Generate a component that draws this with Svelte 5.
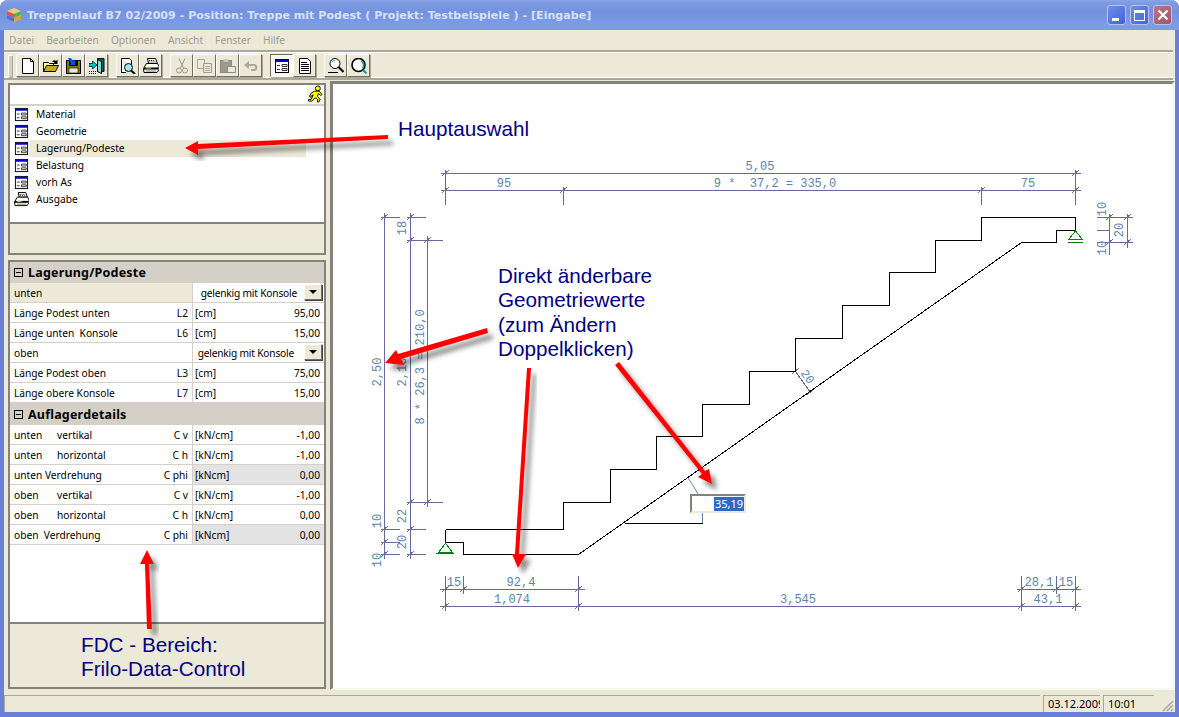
<script>
  const menus = ["Datei", "Bearbeiten", "Optionen", "Ansicht", "Fenster", "Hilfe"];

  const toolGroups = [
    ["new", "open", "save", "exit"],
    ["preview", "print"],
    ["cut", "copy", "paste", "undo"],
    ["form", "doc"],
    ["zoom", "zoomall"],
  ];

  const navItems = [
    { name: "Material", icon: "form" },
    { name: "Geometrie", icon: "form" },
    { name: "Lagerung/Podeste", icon: "form", active: true },
    { name: "Belastung", icon: "form" },
    { name: "vorh As", icon: "form" },
    { name: "Ausgabe", icon: "print" },
  ];

  const lagerRows = [
    { label: "unten", select: "gelenkig mit Konsole", tint: true, pad: 23 },
    { label: "Länge Podest unten", sym: "L2", unit: "[cm]", val: "95,00" },
    { label: "Länge unten  Konsole", sym: "L6", unit: "[cm]", val: "15,00" },
    { label: "oben", select: "gelenkig mit Konsole", pad: 26 },
    { label: "Länge Podest oben", sym: "L3", unit: "[cm]", val: "75,00" },
    { label: "Länge obere Konsole", sym: "L7", unit: "[cm]", val: "15,00" },
  ];

  const detailRows = [
    { label: "unten", tab: "vertikal", sym: "C v", unit: "[kN/cm]", val: "-1,00" },
    { label: "unten", tab: "horizontal", sym: "C h", unit: "[kN/cm]", val: "-1,00" },
    { label: "unten Verdrehung", sym: "C phi", unit: "[kNcm]", val: "0,00", grey: true },
    { label: "oben", tab: "vertikal", sym: "C v", unit: "[kN/cm]", val: "-1,00" },
    { label: "oben", tab: "horizontal", sym: "C h", unit: "[kN/cm]", val: "0,00" },
    { label: "oben  Verdrehung", sym: "C phi", unit: "[kNcm]", val: "0,00", grey: true },
  ];

  // drawing, in page coordinates
  const stairs =
    "445.5,529.5 563.5,529.5 563.5,502.5 610.5,502.5 610.5,469.5 656.5,469.5 656.5,436.5 702.5,436.5 702.5,404.5 749.5,404.5 749.5,371.5 795.5,371.5 795.5,338.5 842.5,338.5 842.5,305.5 889.5,305.5 889.5,272.5 935.5,272.5 935.5,240.5 981.5,240.5 981.5,217.5 1075.5,217.5 1075.5,230.5 1056.5,230.5 1056.5,242.5 1021.5,242.5 578.5,554.5 463.5,554.5 463.5,542.5 445.5,542.5 445.5,529.5";

  const dimLines = [
    [440, 173, 1080, 173], [440, 190, 1080, 190],
    [445, 169, 445, 204], [563, 186, 563, 204], [981, 186, 981, 204], [1075, 169, 1075, 204],
    [384, 212, 384, 558], [410, 212, 410, 558], [427, 235, 427, 506],
    [380, 217, 399, 217], [406, 217, 425, 217], [406, 240, 442, 240], [406, 502, 442, 502],
    [380, 529, 399, 529], [406, 529, 425, 529], [380, 542, 399, 542], [380, 554, 399, 554], [406, 554, 425, 554],
    [1096, 217, 1132, 217], [1096, 230, 1109, 230], [1096, 242, 1132, 242],
    [1109, 213, 1109, 254], [1127, 213, 1127, 247],
    [439, 589, 584, 589], [439, 606, 1080, 606], [1016, 589, 1080, 589],
    [445, 575, 445, 610], [463, 575, 463, 593], [578, 575, 578, 610],
    [1021, 575, 1021, 610], [1056, 575, 1056, 593], [1075, 575, 1075, 610],
    [795, 371, 810, 392],
  ];

  const ticks = [
    [445, 173], [1075, 173], [445, 190], [563, 190], [981, 190], [1075, 190],
    [384, 217], [410, 217], [410, 240], [427, 240], [410, 502], [427, 502],
    [384, 529], [410, 529], [384, 542], [384, 554], [410, 554],
    [1109, 217], [1127, 217], [1109, 242], [1127, 242],
    [445, 589], [463, 589], [578, 589], [445, 606], [578, 606],
    [1021, 589], [1056, 589], [1075, 589], [1021, 606], [1075, 606],
    [795, 371], [810, 392],
  ];

  const dimTexts = [
    { x: 760, y: 170, t: "5,05" },
    { x: 504, y: 187, t: "95" },
    { x: 775, y: 187, t: "9 *\u00a0 37,2 = 335,0" },
    { x: 1028, y: 187, t: "75" },
    { x: 454, y: 586, t: "15" },
    { x: 521, y: 586, t: "92,4" },
    { x: 512, y: 603, t: "1,074" },
    { x: 798, y: 603, t: "3,545" },
    { x: 1039, y: 586, t: "28,1" },
    { x: 1066, y: 586, t: "15" },
    { x: 1048, y: 603, t: "43,1" },
    { x: 378, y: 372, t: "2,50", rot: -90 },
    { x: 403, y: 372, t: "2,10", rot: -90 },
    { x: 421, y: 367, t: "8 * 26,3 = 210,0", rot: -90 },
    { x: 403, y: 228, t: "18", rot: -90 },
    { x: 403, y: 516, t: "22", rot: -90 },
    { x: 403, y: 542, t: "20", rot: -90 },
    { x: 378, y: 521, t: "10", rot: -90 },
    { x: 378, y: 560, t: "10", rot: -90 },
    { x: 1103, y: 209, t: "10", rot: -90 },
    { x: 1120, y: 230, t: "20", rot: -90 },
    { x: 1103, y: 248, t: "10", rot: -90 },
    { x: 807, y: 377, t: "20", rot: 55 },
  ];

  const arrows = [
    "388,135 198,144 198,141 185,148 198,155 198,149 388,139",
    "487,328 398,354 396,350 385,363 404,365 401,359 488,333",
    "527,368 515,554 512,554 518,568 526,554 519,554 531,368",
    "615,365 702,474 698,477 712,484 709,469 705,471 619,362",
    "147,629 145,564 140,564 147,550 154,564 149,564 152,629",
  ];
</script>

{#snippet formIcon()}
  <rect x="1.5" y="1.5" width="13" height="13" fill="#fff" stroke="#000" />
  <rect x="2" y="2" width="12" height="2" fill="#0000e0" />
  <path d="M3 7.5h3M8 6.5h5v2H8zM3 11.5h3M8 10.5h5v2H8z" fill="none" stroke="#333" />
{/snippet}

{#snippet printIcon()}
  <path d="M4.5 .5h8l2 5h-9z" fill="#fff" stroke="#000" />
  <path d="M6 2.500h6M6.500 4h6.500" stroke="#000" stroke-dasharray="1 1" />
  <path d="M.5 10.500l3-5h11l1.500 3v3l-2 3H1z" fill="#fff" stroke="#000" />
  <path d="M1 9.500h14.500v2H1z" fill="#000" />
  <path d="M3 9.500h5v1H3z" fill="#e8e800" />
  <path d="M3 13h10" stroke="#777" />
{/snippet}

{#snippet toolIcon(name)}
  <svg class="ico" viewBox="0 0 16 16" width="16" height="16">
    {#if name === "new"}
      <path d="M2.500 .5h8l3 3v12h-11z" fill="#fff" stroke="#000" />
      <path d="M10.500 .5v3h3" fill="none" stroke="#000" />
    {:else if name === "open"}
      <path d="M.5 13.500v-9h5l1 1h4v2" fill="#ffff99" stroke="#000" />
      <path d="M.5 13.500l3-6h12l-3 6z" fill="#c8a820" stroke="#000" />
      <path d="M9 4c1-2 3-2 4-1l1.500-1.500v4.500h-4.500l1.500-1.500c-1-1-1-1-2.500-.5z" fill="#000" />
    {:else if name === "save"}
      <rect x=".5" y="2.500" width="14" height="13" fill="#808000" stroke="#000" />
      <rect x="3" y="10" width="9" height="5" fill="#e8e8d0" stroke="#000" stroke-width="0.600" />
      <rect x="3" y="3" width="9" height="5" fill="#000" />
      <path d="M2 0h2.500l3 3 1.500-1.500v5.500h-5.500l1.500-1.500z" fill="#0050e0" />
    {:else if name === "exit"}
      <path d="M8.500 .5h6.500v13h-6.500z" fill="#006868" stroke="#000" />
      <path d="M8.500 1.500l4 2v12l-4-2z" fill="#90d8d8" stroke="#000" />
      <path d="M0 5.500h3.500V3l4.500 4-4.500 4V8.500H0z" fill="#00c8c8" stroke="#000" stroke-width="0.700" />
      <path d="M0 13.500h8M0 15.500h8" stroke="#000" stroke-dasharray="1 1" />
    {:else if name === "preview"}
      <path d="M1.500 .5h8l2 2v5M6 14.500H1.500V.5" fill="#fff" stroke="#000" />
      <circle cx="8.500" cy="9.500" r="4" fill="#a0e8f0" stroke="#000" />
      <path d="M11 12.500l4 3.500" stroke="#000" stroke-width="2" />
    {:else if name === "print"}
      {@render printIcon()}
    {:else if name === "cut"}
      <path d="M5 .5l4.500 9.500M11 .5l-4.500 9.500" stroke="#9c9a8e" fill="none" />
      <circle cx="5" cy="12.500" r="2.500" fill="none" stroke="#9c9a8e" />
      <circle cx="11" cy="12.500" r="2.500" fill="none" stroke="#9c9a8e" />
    {:else if name === "copy"}
      <path d="M.5 1.500h7v9h-7z" fill="#ece9d8" stroke="#aca899" />
      <path d="M6.500 5.500h8v9h-8z" fill="#ece9d8" stroke="#9c9a8e" />
      <path d="M8 8.500h5M8 10.500h5M8 12.500h5" stroke="#aca899" />
    {:else if name === "paste"}
      <rect x=".5" y="2.500" width="11" height="12" fill="#9c9a8e" stroke="#8c8a7e" />
      <rect x="3.500" y="1" width="5" height="3" fill="#c8c6ba" />
      <path d="M7.500 8.500h8v6h-8z" fill="#ece9d8" stroke="#8c8a7e" />
    {:else if name === "undo"}
      <path d="M4 7h7c3 0 3 5 0 5H8" fill="none" stroke="#aca899" stroke-width="2" />
      <path d="M1 7l5-4v8z" fill="#aca899" />
    {:else if name === "form"}
      {@render formIcon()}
    {:else if name === "doc"}
      <path d="M2.500 .5h8l3 3v12h-11z" fill="#fff" stroke="#000" />
      <path d="M4 4.500h6M4 6.500h8M4 8.500h8M4 10.500h8M4 12.500h8" stroke="#000" />
    {:else if name === "zoom"}
      <circle cx="7" cy="5.500" r="5" fill="#fff" stroke="#000" />
      <path d="M10.500 9l5 5" stroke="#000" stroke-width="2" />
      <path d="M0 14.500h10" stroke="#000" />
      <path d="M4 4a3.500 3.500 0 0 1 2.500-1.500" stroke="#00a0a0" fill="none" />
    {:else}
      <circle cx="7.500" cy="7" r="6.500" fill="#fff" stroke="#000" stroke-width="1.600" />
      <path d="M10 3a5 5 0 0 1 1.500 7.500" stroke="#00b0b0" fill="none" stroke-width="1.500" />
      <path d="M12 12l3.500 3.500" stroke="#00a0a0" stroke-width="2" />
    {/if}
  </svg>
{/snippet}

{#snippet row(r)}
  <div class="row">
    <div class="label" class:tint={r.tint}>
      <span class="name">{#if r.tab}<span class="tab">{r.label}</span>{r.tab}{:else}{r.label}{/if}</span>
      {#if r.sym}<span class="sym">{r.sym}</span>{/if}
    </div>
    {#if r.select}
      <div class="value">
        <span class="choice" style="padding-right: {r.pad}px">{r.select}</span>
        <span class="drop"></span>
      </div>
    {:else}
      <div class="value" class:grey={r.grey}>
        <span>{r.unit}</span><span>{r.val}</span>
      </div>
    {/if}
  </div>
{/snippet}

<div class="window">
  <header class="titlebar">
    <svg class="appicon" viewBox="0 0 16 16" width="16" height="16">
      <path d="M8 1l7 3v8l-7 3-7-3V4z" fill="#e8d070" />
      <path d="M1 4l7 3v4L1 8z" fill="#e85050" />
      <path d="M8 7l7-3v4l-7 3z" fill="#50b060" />
      <path d="M1 8l7 3v4l-7-3z" fill="#5070e0" />
      <path d="M8 11l7-3v4l-7 3z" fill="#e0a040" />
    </svg>
    <span class="title">Treppenlauf B7 02/2009 - Position: Treppe mit Podest ( Projekt: Testbeispiele ) - [Eingabe]</span>
    <div class="caption">
      <span class="capbtn"><i class="min"></i></span>
      <span class="capbtn"><i class="max"></i></span>
      <span class="capbtn close">
        <svg viewBox="0 0 12 12" width="12" height="12"><path d="M1.500 1.500l9 9M10.500 1.500l-9 9" stroke="#fff" stroke-width="2.200" /></svg>
      </span>
    </div>
  </header>

  <nav class="menu">
    {#each menus as m}<span>{m}</span>{/each}
  </nav>

  <div class="toolbar">
    <span class="grip"></span>
    {#each toolGroups as group}
      <div class="group">
        {#each group as t}
          <span class="tool" class:on={t === "form"}>{@render toolIcon(t)}</span>
        {/each}
      </div>
    {/each}
  </div>

  <div class="workspace">
    <aside class="side">
      <section class="panel nav">
        <div class="search">
          <span class="runner">
            <svg viewBox="0 0 16 18" width="15" height="18">
              <circle cx="10.500" cy="3" r="2.600" fill="#ffff00" stroke="#000" />
              <path d="M7 6h5l3 3.500-1.500 1-2.500-2-1 3 3 3-1.500 3h-1.500l.5-2.500-3-2-3 3.500H.5v-1.500l3-.5 2-4.500-1.500.5-1 2-1.500-1 2-3.500z" fill="#ffff00" stroke="#000" />
            </svg>
          </span>
        </div>
        <ul class="list">
          {#each navItems as item}
            <li>
              <svg class="ico" viewBox="0 0 16 16" width="15" height="15">
                {#if item.icon === "form"}{@render formIcon()}{:else}{@render printIcon()}{/if}
              </svg>
              <span class="item" class:active={item.active}>{item.name}</span>
            </li>
          {/each}
        </ul>
        <div class="foot"></div>
      </section>

      <section class="panel fdc">
        <h3 class="head first"><span class="box"></span>Lagerung/Podeste</h3>
        {#each lagerRows as r}{@render row(r)}{/each}
        <h3 class="head"><span class="box"></span>Auflagerdetails</h3>
        {#each detailRows as r}{@render row(r)}{/each}
        <div class="blank"></div>
        <div class="note">FDC - Bereich:<br />Frilo-Data-Control</div>
      </section>
    </aside>

    <main class="canvas">
      <svg class="drawing" viewBox="333 84 839 604" width="839" height="604">
        <g class="dims">
          {#each dimLines as [x1, y1, x2, y2]}
            <line x1={x1 + 0.5} y1={y1 + 0.5} x2={x2 + 0.5} y2={y2 + 0.5} />
          {/each}
          {#each ticks as [x, y]}
            <line x1={x - 3} y1={y + 3} x2={x + 4} y2={y - 3} />
          {/each}
        </g>

        <polyline class="stair" points={stairs} />
        <path class="stair" d="M624.500 523.500H702.500" />
        <path class="arc" d="M688 478Q693 485 698 494M702.500 513V523" />

        <g class="support">
          <path d="M445.500 543L439 552H452ZM436 553.500H454" />
          <path d="M1075.500 231L1069 239H1082ZM1068 242.500H1083" />
        </g>

        {#each dimTexts as d}
          {#if d.rot}
            <text class="dimtext mid" transform="translate({d.x} {d.y}) rotate({d.rot})">{d.t}</text>
          {:else}
            <text class="dimtext" x={d.x} y={d.y}>{d.t}</text>
          {/if}
        {/each}
      </svg>

      <div class="edit"><span>35,19</span></div>
    </main>
  </div>

  <footer class="status">
    <span class="cell grow"></span>
    <span class="cell date">03.12.2009</span>
    <span class="cell time">10:01</span>
    <svg class="sizer" viewBox="0 0 12 12" width="12" height="12">
      <path d="M11 1L1 11M11 5L5 11M11 9L9 11" stroke="#aca899" stroke-width="1.500" />
    </svg>
  </footer>

  <svg class="overlay" viewBox="0 0 1179 717" width="1179" height="717">
    <defs>
      <filter id="shade" x="-30%" y="-30%" width="160%" height="160%">
        <feDropShadow dx="5" dy="6" stdDeviation="2.500" flood-color="#000" flood-opacity="0.450" />
      </filter>
    </defs>
    {#each arrows as pts}
      <polygon points={pts} fill="#ff0000" filter="url(#shade)" />
    {/each}
    <text class="callout" x="398" y="136">Hauptauswahl</text>
    <text class="callout" x="498" y="283">Direkt änderbare</text>
    <text class="callout" x="498" y="307">Geometriewerte</text>
    <text class="callout" x="498" y="332">(zum Ändern</text>
    <text class="callout" x="498" y="356">Doppelklicken)</text>
  </svg>
</div>

<style>
  :global(body) {
    margin: 0;
    background: #fff;
  }

  .window {
    position: relative;
    box-sizing: border-box;
    width: 1179px;
    height: 717px;
    display: flex;
    flex-direction: column;
    background: #ece9d8;
    border-left: 4px solid #6b80d9;
    border-right: 4px solid #6b80d9;
    border-bottom: 5px solid #6b80d9;
    border-radius: 8px 8px 0 0;
    font-family: "Noto Sans", sans-serif;
    font-size: 10.200px;
    color: #000;
  }

  .titlebar {
    height: 30px;
    margin: 0 -4px;
    padding: 0 7px 0 6px;
    flex: none;
    display: flex;
    align-items: center;
    border-radius: 8px 8px 0 0;
    background: linear-gradient(#8aa6ea 0, #7d9ae2 3px, #7491de 12px, #7c9ce6 24px, #7d9be0 30px);
  }
  .appicon { margin-right: 5px; }
  .title {
    flex: 1;
    font-family: "DejaVu Sans", sans-serif;
    font-weight: 700;
    font-size: 11px;
    letter-spacing: 0.050px;
    color: #d7e2f8;
    white-space: pre;
  }
  .caption { display: flex; gap: 4px; }
  .capbtn {
    box-sizing: border-box;
    width: 19px;
    height: 20px;
    display: flex;
    align-items: center;
    justify-content: center;
    position: relative;
    border: 1px solid #b4c6f0;
    border-radius: 3px;
    background: linear-gradient(135deg, #6e90ea, #3f62d6);
  }
  .capbtn.close { background: linear-gradient(135deg, #b97583, #a45668); }
  .min {
    position: absolute;
    left: 4px;
    bottom: 3px;
    width: 7px;
    height: 3px;
    background: #fff;
  }
  .max {
    box-sizing: border-box;
    width: 11px;
    height: 11px;
    border: 1px solid #fff;
    border-top-width: 3px;
  }

  .menu {
    height: 20px;
    flex: none;
    display: flex;
    align-items: center;
    gap: 12px;
    padding-left: 5px;
    color: #9c9b90;
  }

  .toolbar {
    box-sizing: border-box;
    height: 30px;
    flex: none;
    display: flex;
    align-items: center;
    padding: 1px 0 0 4px;
    border-top: 2px solid #aca899;
    border-bottom: 2px solid #aca899;
    box-shadow: inset 0 1px 0 #fff, inset 0 -1px 0 #fff;
    margin-right: 2px;
  }
  .grip {
    width: 3px;
    height: 21px;
    margin-right: 4px;
    background: #d4d0c8;
    border: solid #fff;
    border-width: 1px 0 0 1px;
    box-shadow: 1px 1px 0 #aca899;
  }
  .group { display: flex; margin-right: 8px; }
  .tool {
    box-sizing: border-box;
    width: 23px;
    height: 23px;
    display: flex;
    align-items: center;
    justify-content: center;
    border: 1px solid;
    border-color: #fff #716f64 #716f64 #fff;
    box-shadow: 1px 1px 0 #aca899;
  }
  .tool.on {
    background: #f7f6f0;
    border-color: #716f64 #fff #fff #716f64;
  }
  .ico { display: block; flex: none; }

  .workspace {
    flex: 1;
    min-height: 0;
    display: flex;
  }
  .side {
    width: 318px;
    margin: 3px 4px 2px 4px;
    display: flex;
    flex-direction: column;
    gap: 5px;
    flex: none;
  }
  .panel {
    box-sizing: border-box;
    border: 2px solid #84837b;
    display: flex;
    flex-direction: column;
  }
  .nav { height: 172px; flex: none; }
  .fdc { flex: 1; min-height: 0; }

  .search {
    height: 19px;
    flex: none;
    background: #fff;
    display: flex;
    justify-content: flex-end;
    border-bottom: 2px solid #d4d0c8;
  }
  .runner {
    width: 17px;
    display: flex;
    justify-content: center;
    background: #f4f3ec;
  }
  .list {
    list-style: none;
    height: 118px;
    flex: none;
    margin: 0;
    padding: 0 0 0 4px;
    box-sizing: border-box;
    background: #fff;
    border-bottom: 2px solid #84837b;
  }
  .list li {
    height: 17px;
    display: flex;
    align-items: center;
  }
  .item {
    width: 277px;
    height: 17px;
    line-height: 17px;
    padding-left: 7px;
    box-sizing: border-box;
  }
  .item.active { background: #ece9d8; }
  .foot { flex: 1; }

  .head {
    margin: 0;
    height: 22px;
    flex: none;
    display: flex;
    align-items: center;
    padding-left: 4px;
    background: #d4d0c8;
    font-size: 12.500px;
    font-weight: 700;
    letter-spacing: 0.200px;
  }
  .head.first { height: 21px; }
  .box {
    box-sizing: border-box;
    width: 9px;
    height: 9px;
    margin-right: 5px;
    border: 1px solid #000;
    background: linear-gradient(#000, #000) center / 5px 1px no-repeat;
  }

  .row {
    box-sizing: border-box;
    height: 20px;
    flex: none;
    display: grid;
    grid-template-columns: 183px minmax(0, 1fr);
    border-bottom: 1px solid #d4d0c8;
    background: #fff;
  }
  .label {
    display: flex;
    justify-content: space-between;
    align-items: center;
    padding: 0 4px 0 4px;
    border-right: 1px solid #d4d0c8;
  }
  .label.tint { background: #ece9d8; }
  .name { white-space: pre; }
  .tab { display: inline-block; width: 43px; }
  .value {
    display: flex;
    justify-content: space-between;
    align-items: center;
    padding: 0 4px 0 2px;
    position: relative;
  }
  .value.grey { background: #e3e3e3; }
  .choice {
    margin-left: auto;
    white-space: nowrap;
    letter-spacing: -0.200px;
  }
  .drop {
    position: absolute;
    right: 2px;
    top: 1px;
    box-sizing: border-box;
    width: 18px;
    height: 16px;
    border: 1px solid;
    border-color: #fff #716f64 #716f64 #fff;
    box-shadow: 1px 1px 0 #404040;
    background: #ece9d8;
  }
  .drop::after {
    content: "";
    position: absolute;
    left: 4px;
    top: 5px;
    border: 4px solid transparent;
    border-top: 4px solid #000;
    border-bottom: 0;
  }
  .blank { flex: 1; background: #fff; }
  .note {
    height: 65px;
    flex: none;
    box-sizing: border-box;
    padding: 9px 0 0 71px;
    border-top: 2px solid #84837b;
    font-family: "Liberation Sans", sans-serif;
    font-size: 20.700px;
    line-height: 24px;
    color: #000080;
  }

  .canvas {
    position: relative;
    box-sizing: border-box;
    flex: 1;
    margin: 1px 0 1px;
    border: solid;
    border-width: 3px 3px 2px 3px;
    border-color: #84837b #f8f7f2 #f8f7f2 #84837b;
    background: #fff;
    overflow: hidden;
  }
  .drawing { display: block; }
  .dims line {
    stroke: #68689a;
    stroke-width: 1;
    shape-rendering: crispEdges;
  }
  .stair {
    fill: none;
    stroke: #000;
    stroke-width: 1;
    shape-rendering: crispEdges;
  }
  .arc {
    fill: none;
    stroke: #5b84ad;
    stroke-width: 1;
  }
  .support path {
    fill: none;
    stroke: #008000;
    stroke-width: 1;
    shape-rendering: crispEdges;
  }
  .dimtext {
    font-family: "Liberation Mono", monospace;
    font-size: 12px;
    fill: #5b84ad;
    text-anchor: middle;
  }
  .dimtext.mid { dominant-baseline: middle; }

  .edit {
    position: absolute;
    left: 357px;
    top: 410px;
    box-sizing: border-box;
    width: 56px;
    height: 19px;
    display: flex;
    justify-content: flex-end;
    padding: 1px 0 0 0;
    background: #fff;
    border: 2px solid;
    border-color: #84837b #ece9d8 #ece9d8 #84837b;
    font-size: 11px;
    line-height: 14px;
    color: #fff;
  }
  .edit span { background: #316ac5; padding: 0 1px; }

  .status {
    height: 21px;
    flex: none;
    display: flex;
    align-items: flex-end;
    gap: 3px;
  }
  .cell {
    box-sizing: border-box;
    height: 17px;
    border: solid #aca899;
    border-width: 1px 0 0 1px;
    font-size: 11px;
    line-height: 16px;
    padding-left: 4px;
    overflow: hidden;
    white-space: nowrap;
  }
  .grow { flex: 1; }
  .date { width: 57px; }
  .time { width: 51px; }
  .sizer { margin: 0 1px 0 5px; }

  .overlay {
    position: absolute;
    left: -4px;
    top: 0;
    pointer-events: none;
  }
  .callout {
    font-family: "Liberation Sans", sans-serif;
    font-size: 20.700px;
    fill: #000080;
  }
</style>
